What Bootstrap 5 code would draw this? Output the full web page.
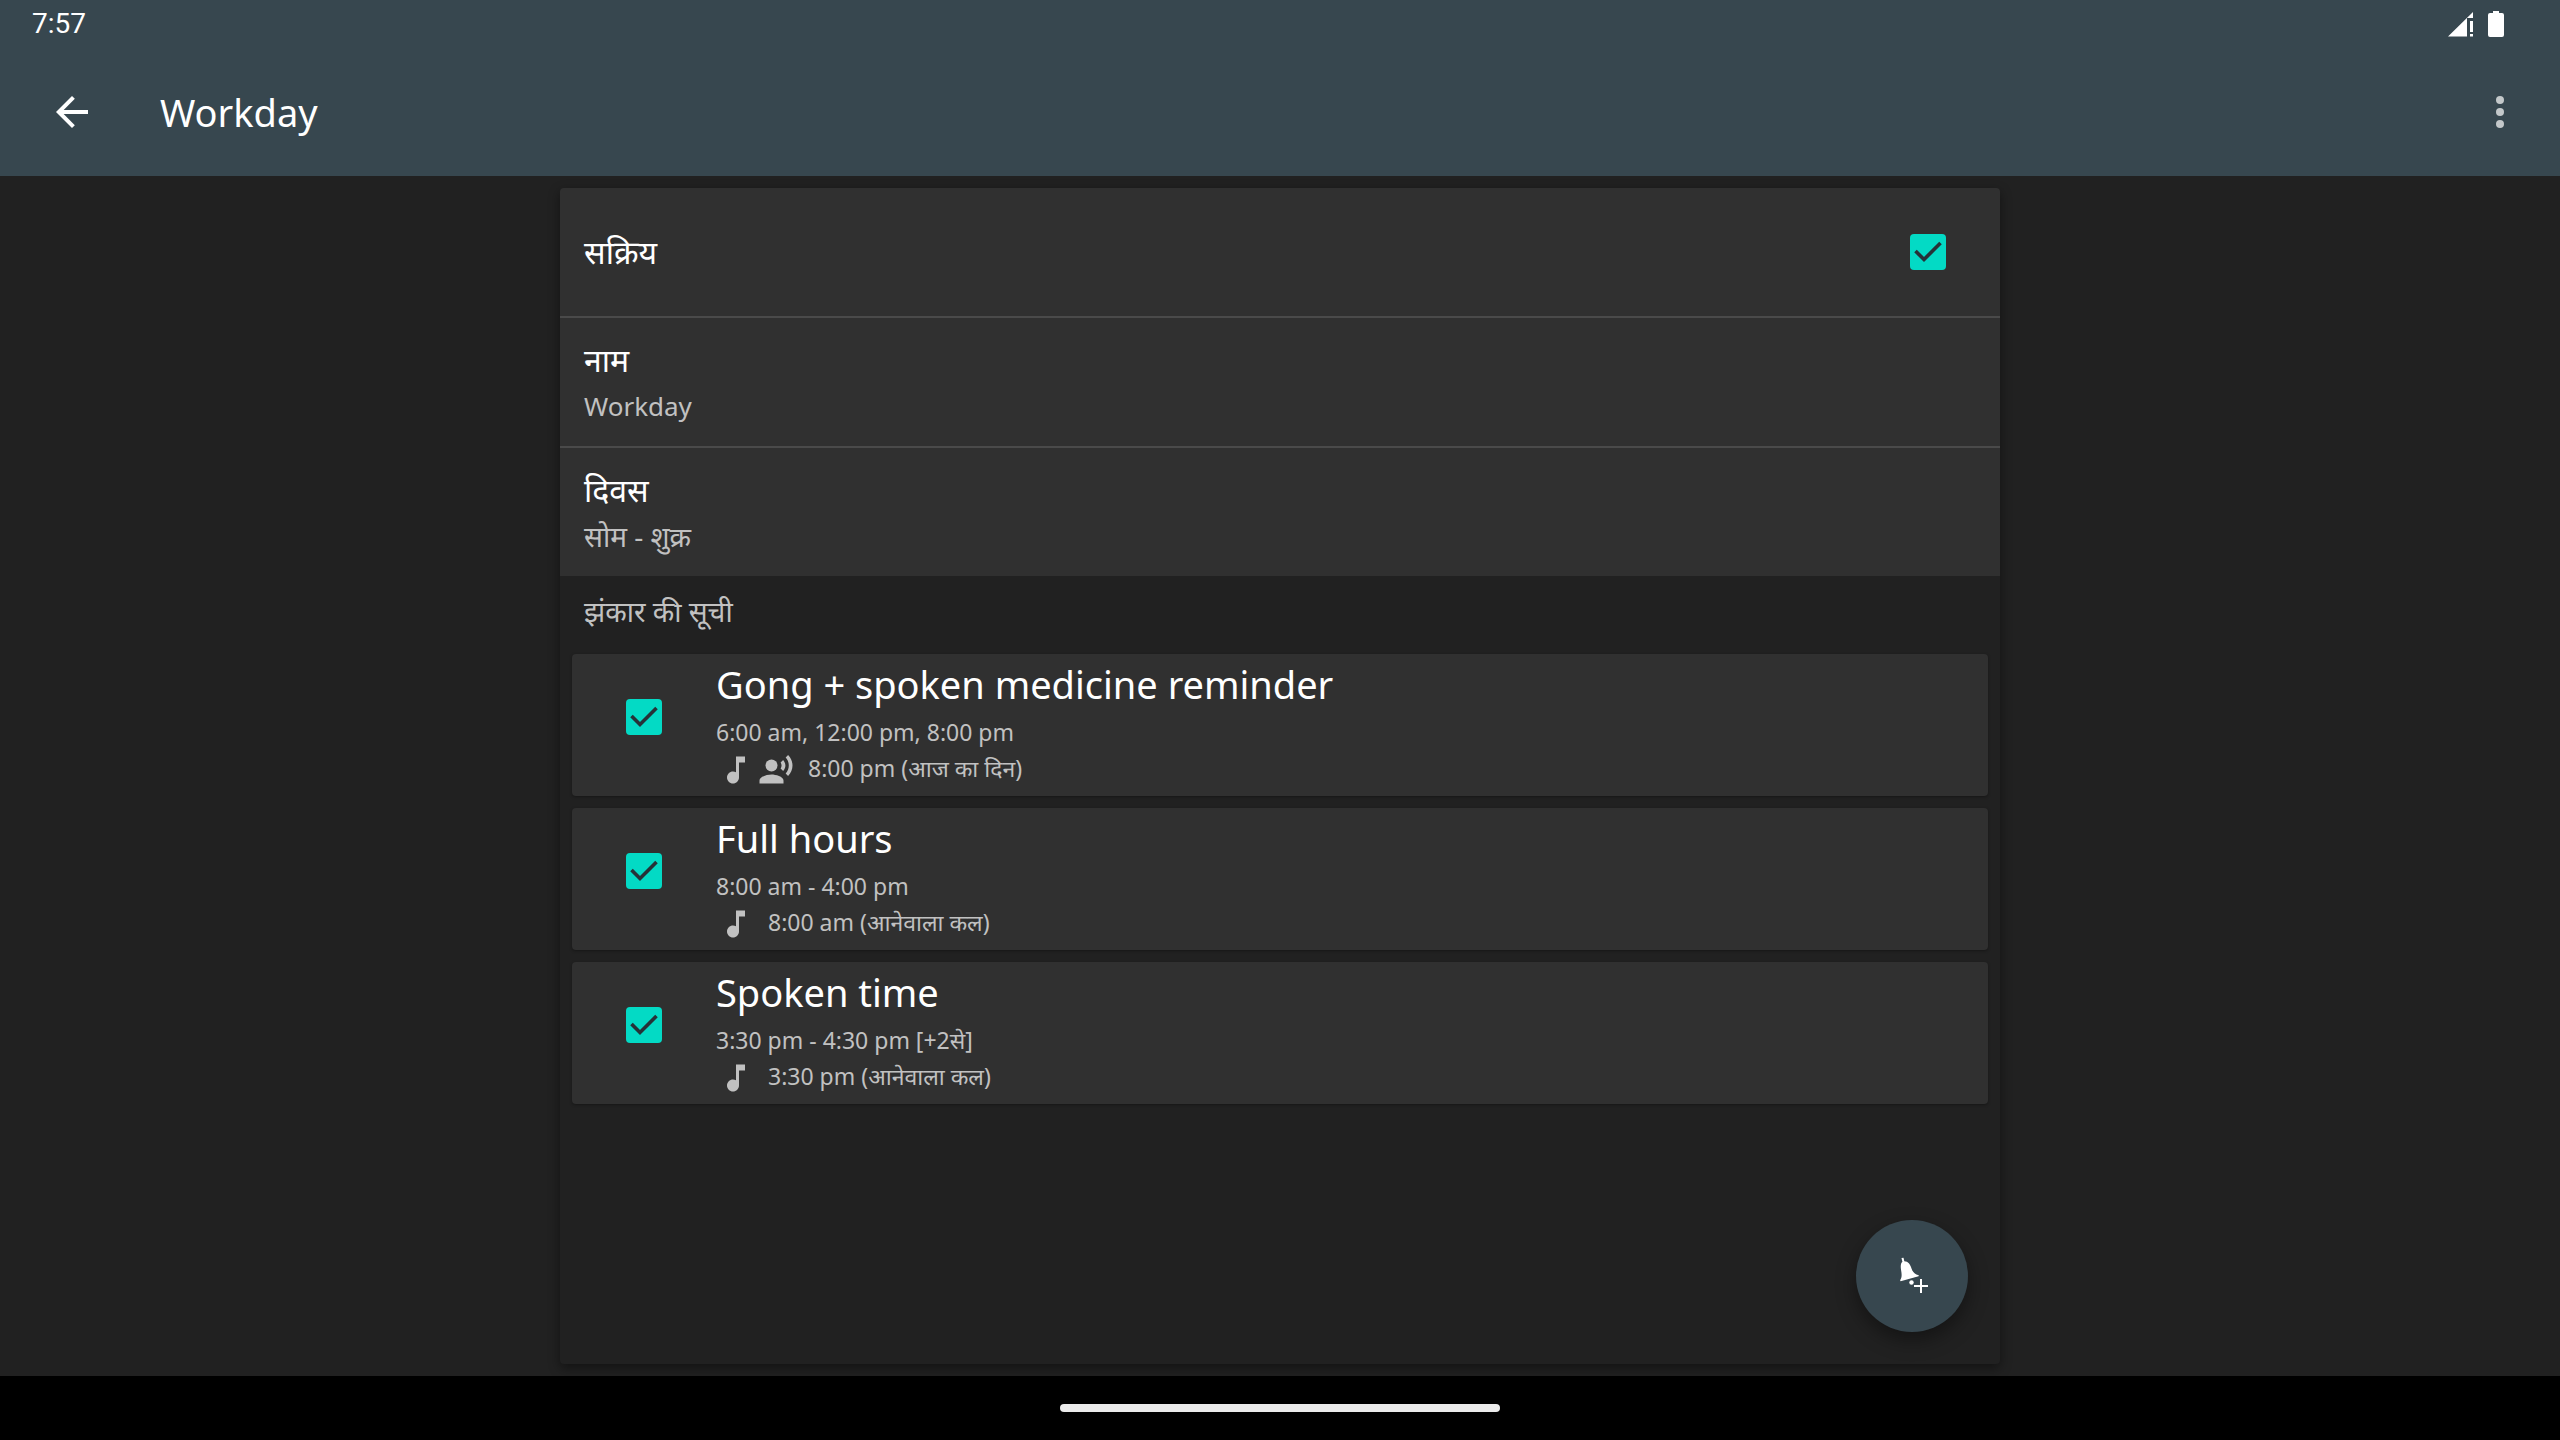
<!DOCTYPE html>
<html lang="hi" data-bs-theme="dark">
<head>
<meta charset="utf-8">
<meta name="viewport" content="width=device-width, initial-scale=1">
<title>Workday</title>
<link href="https://cdn.jsdelivr.net/npm/bootstrap@5.3.0/dist/css/bootstrap.min.css" rel="stylesheet">
<style>
  body { background: #212121; color: #fff; font-family: "Noto Sans", "Noto Sans Devanagari", sans-serif; }
  .top-area { background: #37474f; }
  .status-line { height: 48px; padding: 0 56px 0 32px; font: 28px/48px Roboto, sans-serif; }
  .app-bar { height: 128px; padding: 0 36px 0 48px; }
  .app-bar h1 { font-size: 38px; line-height: 60px; font-weight: 400; margin-left: 64px; }
  .bare { background: none; border: 0; padding: 0; line-height: 0; color: #fff; }
  .bare-dim { color: #c3c8ca; }
  .page-body { padding: 12px; }
  .sheet { max-width: 1440px; border-radius: 4px; background: #212121; box-shadow: 0 4px 12px rgba(0,0,0,.45); }
  .settings { --bs-list-group-bg: #303030; --bs-list-group-border-color: #4a4a4a; --bs-list-group-border-radius: 4px; }
  .setting { min-height: 130px; padding: 0 54px 0 24px; border-width: 0 0 2px; background: #303030; border-color: #4a4a4a; }
  .setting:last-child { min-height: 128px; border-bottom: 0; border-radius: 0; }
  .setting-name { font-size: 32px; line-height: 48px; color: #fff; }
  .setting-value, .section-name { font-size: 28px; line-height: 44px; color: #c1c1c1; }
  .setting-value:lang(en) { font-size: 26px; }
  .section-name { line-height: 70px; padding-left: 24px; margin: 0 0 8px; font-weight: 400; }
  .tick { appearance: none; width: 36px; height: 36px; margin: 0; flex: none; border-radius: 4px; background: #03dac5 url("data:image/svg+xml,%3Csvg xmlns='http://www.w3.org/2000/svg' viewBox='0 0 36 36'%3E%3Cpath d='M5.500 17L14 25.500L30.500 9' fill='none' stroke='%23263238' stroke-width='3.600'/%3E%3C/svg%3E"); }
  .chimes { gap: 12px; padding: 0 12px; }
  .chime { background: #303030; border: 0; border-radius: 4px; padding: 0 24px 10px 54px; box-shadow: 0 1px 3px rgba(0,0,0,.35); }
  .chime .tick { margin: 45px 54px 0 0; }
  .chime h3 { font-size: 38px; line-height: 60px; font-weight: 400; margin: 0; color: #fff; }
  .chime-line { font-size: 23px; line-height: 36px; color: #c1c1c1; }
  .chime-icons { gap: 4px; margin: 2px 14px -2px 2px; }
  .add-btn { right: 32px; bottom: 32px; width: 112px; height: 112px; background: #37474f; box-shadow: 0 8px 20px rgba(0,0,0,.4); }
  .gesture-bar { height: 64px; background: #000; }
  .pill { width: 440px; height: 8px; background: #ebebeb; border-radius: 4px; }
  svg { display: block; }
</style>
<script src="https://cdn.jsdelivr.net/npm/bootstrap@5.3.0/dist/js/bootstrap.bundle.min.js"></script>
</head>
<body class="d-flex flex-column min-vh-100">
<svg width="0" height="0" class="position-absolute" aria-hidden="true">
  <symbol id="note" viewBox="0 0 24 24"><path fill="currentColor" d="M12 3v10.550c-.59-.34-1.270-.55-2-.55-2.210 0-4 1.790-4 4s1.790 4 4 4 4-1.790 4-4V7h4V3h-6z"/></symbol>
  <symbol id="voice" viewBox="0 0 24 24"><circle cx="9" cy="9" r="4" fill="currentColor"/><path fill="currentColor" d="M9 15c-2.670 0-8 1.340-8 4v2h16v-2c0-2.660-5.330-4-8-4zm7.760-9.640l-1.680 1.690c.84 1.180.84 2.710 0 3.890l1.680 1.690c2.020-2.020 2.020-5.070 0-7.270zM20.070 2l-1.630 1.630c2.770 3.020 2.770 7.560 0 10.740L20.070 16c3.900-3.890 3.910-9.950 0-14z"/></symbol>
</svg>
<header class="top-area">
  <div class="status-line d-flex align-items-center justify-content-between">
    <span>7:57</span>
    <svg width="56" height="28" viewBox="0 0 56 28" fill="#fff" aria-hidden="true"><path d="M0 26.500L25 2v6h-6v18.500zM22 11h3v11h-3zM22 24h3v2.500h-3z"/><path d="M45 1h6v2h3q2 0 2 2v20q0 2-2 2H42q-2 0-2-2V5q0-2 2-2h3z"/></svg>
  </div>
  <nav class="app-bar d-flex align-items-center">
    <button type="button" class="bare" aria-label="Back"><svg width="48" height="48" viewBox="0 0 24 24"><path fill="currentColor" d="M20 11H7.830l5.590-5.590L12 4l-8 8 8 8 1.410-1.410L7.830 13H20v-2z"/></svg></button>
    <h1 class="mb-0">Workday</h1>
    <button type="button" class="bare bare-dim ms-auto" aria-label="Menu"><svg width="48" height="48" viewBox="0 0 24 24" fill="currentColor"><circle cx="12" cy="6" r="2"/><circle cx="12" cy="12" r="2"/><circle cx="12" cy="18" r="2"/></svg></button>
  </nav>
</header>
<main class="page-body flex-grow-1 d-flex justify-content-center">
  <div class="sheet w-100 position-relative">
    <div class="list-group settings">
      <div class="list-group-item setting d-flex align-items-center justify-content-between">
        <label class="setting-name" for="active">सक्रिय</label>
        <input class="tick" type="checkbox" id="active" checked>
      </div>
      <div class="list-group-item setting d-flex flex-column justify-content-center">
        <div class="setting-name">नाम</div>
        <div class="setting-value" lang="en">Workday</div>
      </div>
      <div class="list-group-item setting d-flex flex-column justify-content-center">
        <div class="setting-name">दिवस</div>
        <div class="setting-value">सोम - शुक्र</div>
      </div>
    </div>
    <h2 class="section-name">झंकार की सूची</h2>
    <div class="chimes d-flex flex-column">
      <div class="card chime flex-row align-items-start">
        <input class="tick" type="checkbox" id="c1" checked>
        <div>
          <h3><label for="c1">Gong + spoken medicine reminder</label></h3>
          <div class="chime-line">6:00 am, 12:00 pm, 8:00 pm</div>
          <div class="chime-line d-flex"><span class="chime-icons d-flex"><svg width="36" height="36"><use href="#note"/></svg><svg width="36" height="36"><use href="#voice"/></svg></span>8:00 pm (आज का दिन)</div>
        </div>
      </div>
      <div class="card chime flex-row align-items-start">
        <input class="tick" type="checkbox" id="c2" checked>
        <div>
          <h3><label for="c2">Full hours</label></h3>
          <div class="chime-line">8:00 am - 4:00 pm</div>
          <div class="chime-line d-flex"><span class="chime-icons d-flex"><svg width="36" height="36"><use href="#note"/></svg></span>8:00 am (आनेवाला कल)</div>
        </div>
      </div>
      <div class="card chime flex-row align-items-start">
        <input class="tick" type="checkbox" id="c3" checked>
        <div>
          <h3><label for="c3">Spoken time</label></h3>
          <div class="chime-line">3:30 pm - 4:30 pm [+2से]</div>
          <div class="chime-line d-flex"><span class="chime-icons d-flex"><svg width="36" height="36"><use href="#note"/></svg></span>3:30 pm (आनेवाला कल)</div>
        </div>
      </div>
    </div>
    <button type="button" class="bare add-btn rounded-circle position-absolute d-flex align-items-center justify-content-center" aria-label="Add">
      <svg width="48" height="48" viewBox="0 0 48 48"><path fill="currentColor" d="M13.500 6l2-.3.8 3.600c4 .2 5.700 2.700 7.200 7.200 1.300 3.600 3 5.800 7.300 6.700l-.2 1-18 5-.5-1c2-3 1.700-6 1-10-.8-4.600-.2-7.300 1.300-8.500z"/><circle cx="23.500" cy="30.500" r="2.200" fill="currentColor"/><path d="M26 34h14M33 27v14" stroke="currentColor" stroke-width="2"/></svg>
    </button>
  </div>
</main>
<footer class="gesture-bar d-flex align-items-center justify-content-center"><div class="pill"></div></footer>
</body>
</html>
